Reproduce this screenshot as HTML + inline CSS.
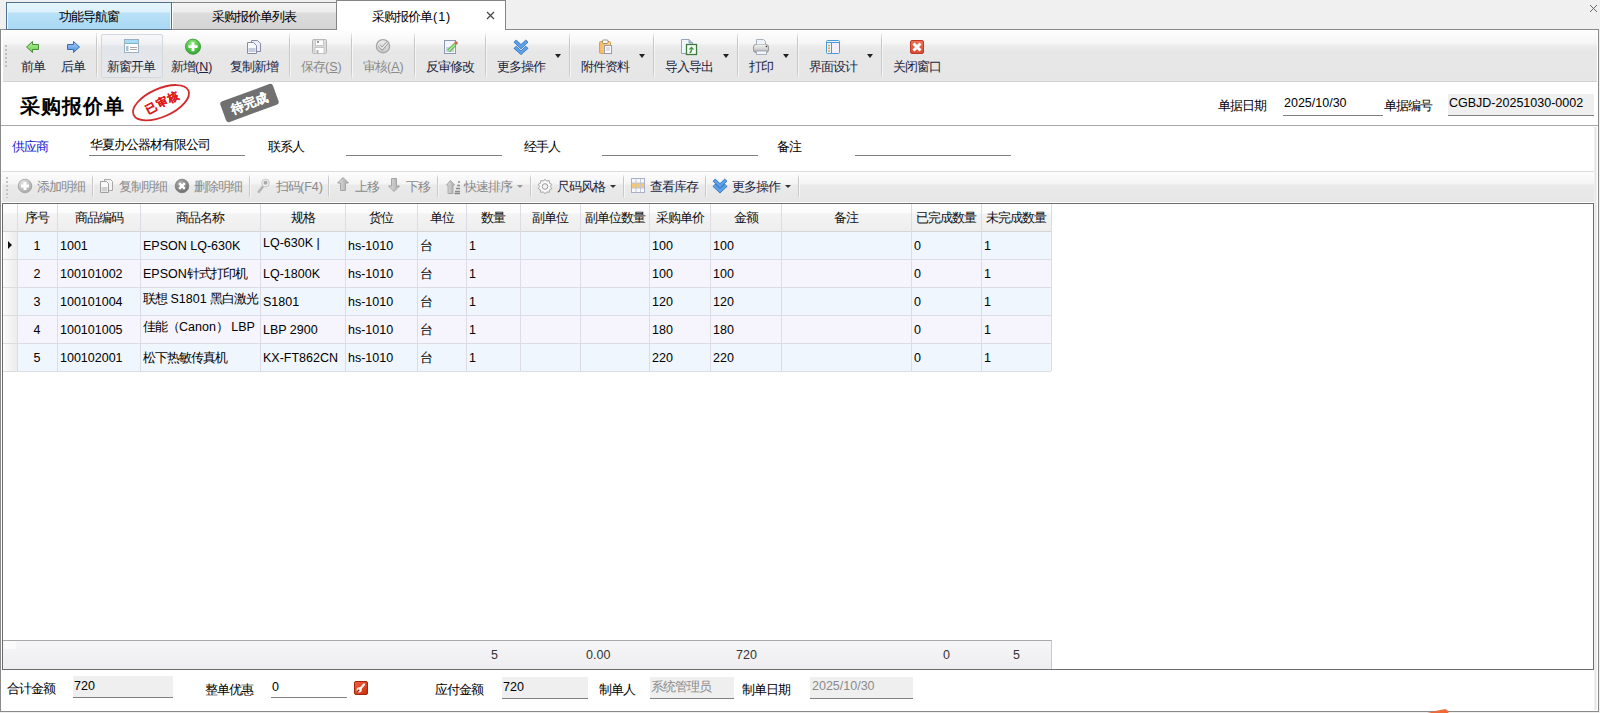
<!DOCTYPE html>
<html><head><meta charset="utf-8">
<style>
*{box-sizing:border-box;margin:0;padding:0}
html,body{width:1600px;height:713px;overflow:hidden;background:#f0f0f0;font-family:"Liberation Sans",sans-serif;font-size:12px;color:#000}
.a{position:absolute}
.t{position:absolute;white-space:nowrap;line-height:14px}
#tab1{left:6px;top:2px;width:166px;height:28px;border:1px solid #50708e;box-shadow:inset 1px 0 #eaf8fe,inset -1px 0 #e0f4fc;background:linear-gradient(#e6f6fd 0,#dcf1fb 9px,#b9e1f8 10px,#a9d8f4 100%)}
#tab2{left:172px;top:2px;width:165px;height:28px;border:1px solid #858585;border-left:none;background:linear-gradient(#f4f4f4 0,#ececec 9px,#dcdcdc 10px,#d4d4d4 100%);box-shadow:inset 1px 0 #fff}
#tab3{left:336px;top:0;width:170px;height:30px;border:1px solid #858585;border-bottom:none;background:#fff}
#panel{left:0;top:29px;width:1599px;height:683px;border:1px solid #8a8a8a;background:#fff}
#tb{left:3px;top:30px;width:1594px;height:52px;background:linear-gradient(#fefefe 0,#f6f6f6 13px,#ececec 16px,#e7e7e7 22px,#e6e6e6 50px);border-bottom:1px solid #d2d2d2}
.sep{position:absolute;width:1px;background:linear-gradient(rgba(200,200,200,0.3),#c8c8c8 15%,#c8c8c8 85%,rgba(200,200,200,0.3));box-shadow:1px 0 rgba(255,255,255,0.6)}
.btxt{position:absolute;white-space:nowrap;line-height:14px;color:#1c2540}
.dis{color:#8a8a8a}
.dd{position:absolute;width:0;height:0;border-left:3.5px solid transparent;border-right:3.5px solid transparent;border-top:4px solid #222}
.c{font-size:13px;letter-spacing:-1px}
.t,.btxt{font-size:12.5px}
</style></head><body>
<!-- tabs -->
<div class="a" id="tab1"></div>
<div class="t" style="left:59px;top:10px"><span class="c">功能导航窗</span></div>
<div class="a" id="tab2"></div>
<div class="t" style="left:212px;top:10px"><span class="c">采购报价单列表</span></div>
<div class="a" id="panel"></div>
<div class="a" style="left:6px;top:29px;width:166px;height:1px;background:#5a7894"></div>
<div class="a" id="tab3"></div>
<div class="t" style="left:372px;top:10px"><span class="c">采购报价单</span><span style="letter-spacing:1px;margin-left:1px">(1)</span></div>
<svg class="a" style="left:486px;top:11px" width="9" height="9"><path d="M1 1L8 8M8 1L1 8" stroke="#444" stroke-width="1.2"/></svg>
<svg class="a" style="left:1589px;top:4px" width="9" height="9"><path d="M1 1L8 8M8 1L1 8" stroke="#666" stroke-width="1"/></svg>

<!-- main toolbar -->
<div class="a" id="tb"></div>
<div class="sep" style="left:5px;top:45px;height:22px;width:2px;background:repeating-linear-gradient(#c0c0c0 0 2px,transparent 2px 4px);box-shadow:none"></div>
<div class="a" style="left:101px;top:34px;width:62px;height:44px;border:1px solid #d2d8de;border-radius:2px;background:linear-gradient(#f8f8fa 0,#eeeff2 10px,#e2e5ea 11px,#e6e8ec 100%)"></div>
<div class="sep" style="left:96px;top:33px;height:45px"></div>
<div class="sep" style="left:289px;top:33px;height:45px"></div>
<div class="sep" style="left:351px;top:33px;height:45px"></div>
<div class="sep" style="left:414px;top:33px;height:45px"></div>
<div class="sep" style="left:485px;top:33px;height:45px"></div>
<div class="sep" style="left:569px;top:33px;height:45px"></div>
<div class="sep" style="left:653px;top:33px;height:45px"></div>
<div class="sep" style="left:737px;top:33px;height:45px"></div>
<div class="sep" style="left:797px;top:33px;height:45px"></div>
<div class="sep" style="left:881px;top:33px;height:45px"></div>
<div class="btxt" style="left:21px;top:60px"><span class="c">前单</span></div>
<div class="btxt" style="left:61px;top:60px"><span class="c">后单</span></div>
<div class="btxt" style="left:107px;top:60px"><span class="c">新窗开单</span></div>
<div class="btxt" style="left:171px;top:60px"><span class="c">新增</span>(<u>N</u>)</div>
<div class="btxt" style="left:230px;top:60px"><span class="c">复制新增</span></div>
<div class="btxt dis" style="left:301px;top:60px"><span class="c">保存</span>(<u>S</u>)</div>
<div class="btxt dis" style="left:363px;top:60px"><span class="c">审核</span>(<u>A</u>)</div>
<div class="btxt" style="left:426px;top:60px"><span class="c">反审修改</span></div>
<div class="btxt" style="left:497px;top:60px"><span class="c">更多操作</span></div>
<div class="btxt" style="left:581px;top:60px"><span class="c">附件资料</span></div>
<div class="btxt" style="left:665px;top:60px"><span class="c">导入导出</span></div>
<div class="btxt" style="left:749px;top:60px"><span class="c">打印</span></div>
<div class="btxt" style="left:809px;top:60px"><span class="c">界面设计</span></div>
<div class="btxt" style="left:893px;top:60px"><span class="c">关闭窗口</span></div>
<div class="dd" style="left:555px;top:54px"></div>
<div class="dd" style="left:639px;top:54px"></div>
<div class="dd" style="left:723px;top:54px"></div>
<div class="dd" style="left:783px;top:54px"></div>
<div class="dd" style="left:867px;top:54px"></div>
<svg class="a" style="left:0;top:0" width="1000" height="82">
<defs>
<linearGradient id="gG" x1="0" y1="0" x2="0" y2="1"><stop offset="0" stop-color="#b4f09a"/><stop offset="1" stop-color="#6ad04a"/></linearGradient>
<linearGradient id="gB" x1="0" y1="0" x2="0" y2="1"><stop offset="0" stop-color="#a8d0fa"/><stop offset="1" stop-color="#4a90e0"/></linearGradient>
<radialGradient id="gPlus" cx="0.45" cy="0.3" r="0.75"><stop offset="0" stop-color="#9ae88a"/><stop offset="0.6" stop-color="#4cc040"/><stop offset="1" stop-color="#2a9a2a"/></radialGradient>
<linearGradient id="gCk" x1="0" y1="0" x2="0" y2="1"><stop offset="0" stop-color="#f0f0f0"/><stop offset="1" stop-color="#c8c8c8"/></linearGradient>
<linearGradient id="gOr" x1="0" y1="0" x2="1" y2="0"><stop offset="0" stop-color="#f8b860"/><stop offset="1" stop-color="#fcd890"/></linearGradient>
<linearGradient id="gRd" x1="0" y1="0" x2="0" y2="1"><stop offset="0" stop-color="#f07050"/><stop offset="1" stop-color="#d84a30"/></linearGradient>
<linearGradient id="gPr" x1="0" y1="0" x2="0" y2="1"><stop offset="0" stop-color="#f4f4f4"/><stop offset="0.6" stop-color="#d0d0d0"/><stop offset="1" stop-color="#8a8a8a"/></linearGradient>
</defs>
<path d="M26.5 47L32.5 41.5V44.5H38.5V49.5H32.5V52.5Z" fill="url(#gG)" stroke="#4a8a3a" stroke-width="1" stroke-linejoin="round"/>
<path d="M79.5 47L73.5 41.5V44.5H67.5V49.5H73.5V52.5Z" fill="url(#gB)" stroke="#3a6aa8" stroke-width="1" stroke-linejoin="round"/>
<rect x="124.5" y="39.5" width="14" height="13" fill="#fff" stroke="#9ab0c4"/>
<rect x="125" y="40" width="13" height="3.5" fill="#a8dcf4"/>
<path d="M125 43.5H138" stroke="#7ab4d0"/>
<rect x="126" y="46" width="2.5" height="5" fill="#a8c0d4"/>
<path d="M130 47.5H137M130 49.5H137" stroke="#b0a8a0"/>
<circle cx="193" cy="46.7" r="7.6" fill="url(#gPlus)" stroke="#3a9a3a" stroke-width="0.8"/>
<path d="M193 42.2V51.2M188.5 46.7H197.5" stroke="#fff" stroke-width="2.8"/>
<path d="M251.5 40.5H257.5L260.5 43.5V51.5H251.5Z" fill="#eeeef8" stroke="#8a8aa4"/>
<path d="M247.5 42.5H253.5L256.5 45.5V53.5H247.5Z" fill="#f6f8fc" stroke="#8a8aa4"/>
<rect x="248.5" y="48" width="7" height="4" fill="#c4cce0"/>
<rect x="312.5" y="39.5" width="14" height="14" rx="1" fill="#dcdcdc" stroke="#b4b4b4"/>
<rect x="315.5" y="40" width="8" height="5.5" fill="#fff" stroke="#bcbcbc" stroke-width="0.8"/>
<rect x="317" y="41" width="2" height="2" fill="#9a9a9a"/>
<rect x="315" y="47.5" width="9" height="6" fill="#fff" stroke="#bcbcbc" stroke-width="0.8"/>
<rect x="316.5" y="50" width="2" height="3.5" fill="#b0b0b0"/>
<circle cx="383" cy="46.2" r="6.6" fill="url(#gCk)" stroke="#a4a4a4" stroke-width="1.3"/>
<path d="M379 45.5L382.2 48.7L387.5 42.5" fill="none" stroke="#9a9a9a" stroke-width="3"/>
<path d="M379 45.5L382.2 48.7L387.5 42.5" fill="none" stroke="#f4f4f4" stroke-width="1.2"/>
<rect x="444.5" y="40.5" width="11" height="13" fill="#f4f8fe" stroke="#8a9ab4"/>
<rect x="446" y="47" width="8" height="5" fill="#c8d0e2"/>
<path d="M448.5 51L455 44.5" stroke="#4a9a3a" stroke-width="3.4"/>
<path d="M448.5 51L455 44.5" stroke="#a4ea8a" stroke-width="2"/>
<circle cx="456" cy="43" r="1.8" fill="#c86a50"/>
<path d="M514 42.2L516.2 40L521 44.6L525.8 40L528 42.2L521 48.8Z" fill="#5aa2ea" stroke="#2a6ab8" stroke-width="0.8" stroke-linejoin="round"/>
<path d="M514 48.4L516.2 46.2L521 50.8L525.8 46.2L528 48.4L521 54.6Z" fill="#5aa2ea" stroke="#2a6ab8" stroke-width="0.8" stroke-linejoin="round"/>
<rect x="599.5" y="41.5" width="11" height="12" rx="1.2" fill="url(#gOr)" stroke="#d8a050"/>
<rect x="602.5" y="40" width="5.5" height="3.5" rx="1" fill="#fff" stroke="#8a7a60" stroke-width="0.8"/>
<rect x="604.5" y="45.5" width="7" height="8" fill="#fafafc" stroke="#9a9aa8"/>
<path d="M606 48H610M606 50H610" stroke="#c0c4d0"/>
<path d="M681.5 39.5H689L692.5 43V53.5H681.5Z" fill="#f0f6fc" stroke="#98a4bc"/>
<path d="M689 39.5V43H692.5" fill="#a8b4cc" stroke="#98a4bc"/>
<rect x="686.5" y="44.5" width="10" height="10" fill="#f8fff8" stroke="#3e7a3e" stroke-width="1.3"/>
<path d="M689.5 52.5C690.5 52.5 691.5 51.5 691.5 49.5" fill="none" stroke="#3a8a3a" stroke-width="1.3"/>
<path d="M688.5 49.5L691.5 46.5L694.5 49.5Z" fill="#3a9a3a"/>
<rect x="753.5" y="44.5" width="15" height="8" rx="2.5" fill="url(#gPr)" stroke="#9a9a9a"/>
<path d="M756.5 44.5V39.5H763.5L765.5 41.5V44.5" fill="#eef4fa" stroke="#a8b0b8"/>
<rect x="756.5" y="51" width="10" height="3.5" fill="#f0f6fc" stroke="#a8b0b8"/>
<circle cx="766.5" cy="46.5" r="0.8" fill="#333"/>
<rect x="826.5" y="40.5" width="13" height="13" rx="1" fill="#eef4fc" stroke="#4a9ad8"/>
<path d="M827 42.5H839M831.5 42.5V53" stroke="#4a9ad8"/>
<rect x="832" y="43" width="7" height="10" fill="#f4eefc"/>
<rect x="827" y="43" width="4" height="10" fill="#e8f6fc"/>
<circle cx="829" cy="45.5" r="1" fill="#e0a040"/>
<circle cx="829" cy="48.2" r="1" fill="#e0a040"/>
<circle cx="829" cy="50.9" r="1" fill="#e0a040"/>
<rect x="910.5" y="40.5" width="13" height="13" rx="1.5" fill="url(#gRd)" stroke="#c03a28"/>
<path d="M913.5 43.5L920.5 50.5M920.5 43.5L913.5 50.5" stroke="#fff" stroke-width="3"/>
</svg>


<!-- title area -->
<div class="a" style="left:20px;top:95px;font-size:20px;line-height:22px;font-weight:bold;letter-spacing:1px;font-family:'Liberation Serif',serif;color:#000;white-space:nowrap">采购报价单</div>
<svg class="a" style="left:120px;top:80px" width="170" height="46">
<g transform="translate(41,22.7) rotate(-24)">
<ellipse cx="0" cy="0" rx="30" ry="14" fill="none" stroke="#d42a2a" stroke-width="1.8"/>
<text x="1.5" y="4" text-anchor="middle" font-size="11" font-weight="bold" fill="#e01818" stroke="#e01818" stroke-width="0.2" font-family="Liberation Sans" letter-spacing="1.5" transform="rotate(-4)">已审核</text>
</g>
<g transform="translate(129.5,23) rotate(-20)">
<rect x="-28" y="-11" width="56" height="22" rx="3" fill="#707070"/>
<text x="0" y="4.5" text-anchor="middle" font-size="12.5" font-weight="bold" fill="#fff" stroke="#fff" stroke-width="0.15" font-family="Liberation Sans">待完成</text>
</g>
</svg>
<div class="a" style="left:1px;top:125px;width:1597px;height:1px;background:#a8a8a8"></div>
<div class="a" style="left:1594px;top:127px;width:3px;height:583px;background:linear-gradient(90deg,#f2f2f2,#e8e8e8 50%,#f6f6f6)"></div>
<div class="t" style="left:1218px;top:99px"><span class="c">单据日期</span></div>
<div class="a" style="left:1283px;top:115px;width:100px;height:1px;background:#808080"></div>
<div class="t" style="left:1284px;top:96px">2025/10/30</div>
<div class="t" style="left:1384px;top:99px"><span class="c">单据编号</span></div>
<div class="a" style="left:1448px;top:94px;width:146px;height:22px;background:#efefef;border-bottom:1px solid #808080"></div>
<div class="t" style="left:1449px;top:96px">CGBJD-20251030-0002</div>

<!-- form row -->
<div class="t" style="left:12px;top:140px;color:#1a1ad0"><span class="c">供应商</span></div>
<div class="t" style="left:90px;top:138px"><span class="c">华夏办公器材有限公司</span></div>
<div class="a" style="left:89px;top:155px;width:156px;height:1px;background:#808080"></div>
<div class="t" style="left:268px;top:140px"><span class="c">联系人</span></div>
<div class="a" style="left:346px;top:155px;width:156px;height:1px;background:#808080"></div>
<div class="t" style="left:524px;top:140px"><span class="c">经手人</span></div>
<div class="a" style="left:602px;top:155px;width:156px;height:1px;background:#808080"></div>
<div class="t" style="left:777px;top:140px"><span class="c">备注</span></div>
<div class="a" style="left:855px;top:155px;width:156px;height:1px;background:#808080"></div>
<div class="a" style="left:2px;top:171px;width:1592px;height:31px;border-top:1px solid #dcdcdc;background:linear-gradient(#fdfdfd 0,#f4f4f4 12px,#eaeaea 13px,#e6e6e6 100%)"></div>
<div class="a" style="left:6px;top:177px;width:2px;height:21px;background:repeating-linear-gradient(#c4c4c4 0 2px,transparent 2px 4px)"></div>
<div class="sep" style="left:92px;top:175px;height:23px"></div>
<div class="sep" style="left:249px;top:175px;height:23px"></div>
<div class="sep" style="left:328px;top:175px;height:23px"></div>
<div class="sep" style="left:437px;top:175px;height:23px"></div>
<div class="sep" style="left:530px;top:175px;height:23px"></div>
<div class="sep" style="left:623px;top:175px;height:23px"></div>
<div class="sep" style="left:705px;top:175px;height:23px"></div>
<div class="sep" style="left:798px;top:175px;height:23px"></div>
<div class="btxt dis" style="left:37px;top:180px"><span class="c">添加明细</span></div>
<div class="btxt dis" style="left:119px;top:180px"><span class="c">复制明细</span></div>
<div class="btxt dis" style="left:194px;top:180px"><span class="c">删除明细</span></div>
<div class="btxt dis" style="left:276px;top:180px"><span class="c">扫码</span>(F4)</div>
<div class="btxt dis" style="left:355px;top:180px"><span class="c">上移</span></div>
<div class="btxt dis" style="left:406px;top:180px"><span class="c">下移</span></div>
<div class="btxt dis" style="left:464px;top:180px"><span class="c">快速排序</span></div>
<div class="btxt" style="left:557px;top:180px"><span class="c">尺码风格</span></div>
<div class="btxt" style="left:650px;top:180px"><span class="c">查看库存</span></div>
<div class="btxt" style="left:732px;top:180px"><span class="c">更多操作</span></div>
<div class="dd" style="left:517px;top:185px;border-width:3px 3px 0;border-top-color:#999"></div>
<div class="dd" style="left:610px;top:185px;border-width:3px 3px 0;border-top-color:#333"></div>
<div class="dd" style="left:785px;top:185px;border-width:3px 3px 0;border-top-color:#333"></div>
<svg class="a" style="left:0;top:170px" width="800" height="34">
<defs><radialGradient id="gg" cx="0.4" cy="0.3" r="0.75"><stop offset="0" stop-color="#e8e8e8"/><stop offset="1" stop-color="#a4a4a4"/></radialGradient>
<radialGradient id="gd" cx="0.4" cy="0.3" r="0.75"><stop offset="0" stop-color="#b0b0b0"/><stop offset="1" stop-color="#6a6a6a"/></radialGradient>
<linearGradient id="ga" x1="0" y1="0" x2="1" y2="0"><stop offset="0" stop-color="#e0e0e0"/><stop offset="1" stop-color="#a8a8a8"/></linearGradient></defs>
<circle cx="25" cy="16" r="6.8" fill="url(#gg)" stroke="#a0a0a0" stroke-width="0.8"/>
<path d="M25 12V20M21 16H29" stroke="#fff" stroke-width="2.8"/>
<path d="M104.5 9.5H110.5L112.5 11.5V20.5H104.5Z" fill="#f4f4f4" stroke="#a8a8a8"/>
<path d="M100.5 11.5H106.5L108.5 13.5V22.5H100.5Z" fill="#fafafa" stroke="#a0a0a0"/>
<rect x="101.5" y="17" width="6" height="4.5" fill="#d0d0d0"/>
<circle cx="182" cy="16" r="6.8" fill="url(#gd)" stroke="#7a7a7a" stroke-width="0.8"/>
<path d="M179.2 13.2L184.8 18.8M184.8 13.2L179.2 18.8" stroke="#fff" stroke-width="2.4"/>
<path d="M263 16.5L258.8 21.8" stroke="#b4b4b4" stroke-width="2.6" stroke-linecap="round"/>
<circle cx="265.5" cy="13" r="3.8" fill="#f4f4f4" stroke="#c4c4c4"/>
<circle cx="265.5" cy="12.8" r="2" fill="#a8a8a8"/>
<path d="M343 7.5L348.5 13H345.5V20.5H340.5V13H337.5Z" fill="url(#ga)" stroke="#a4a4a4" stroke-linejoin="round"/>
<path d="M394 21.5L399.5 16H396.5V8.5H391.5V16H388.5Z" fill="url(#ga)" stroke="#a4a4a4" stroke-linejoin="round"/>
<path d="M450.5 10.5L454.5 15H453V23.5H448V15H446.5Z" fill="url(#ga)" stroke="#a8a8a8" stroke-linejoin="round"/>
<path d="M458 12H460M457 15.5H460M456 18.5H460M455 21.5H460M454.5 23.5H460" stroke="#8a8a8a" stroke-width="1.6"/>
<path d="M545 9.2L546.6 11.1L549.2 10.6L549.5 13.1L551.8 14.3L550.4 16.5L551.8 18.7L549.5 19.9L549.2 22.4L546.6 21.9L545 23.8L543.4 21.9L540.8 22.4L540.5 19.9L538.2 18.7L539.6 16.5L538.2 14.3L540.5 13.1L540.8 10.6L543.4 11.1Z" fill="#fafafa" stroke="#a4a4a4" stroke-linejoin="round"/>
<circle cx="545" cy="16.5" r="2.8" fill="#f4f4f4" stroke="#9a9a9a"/>
<rect x="631.5" y="8.5" width="13" height="14" fill="#f8f8fc" stroke="#a8b0c8"/>
<rect x="632" y="13" width="12" height="5" fill="#f8c870"/>
<path d="M636 9V22M640.5 9V22M632 13H644M632 18H644" stroke="#c0c4d4"/>
<path d="M713 11.2L715.2 9L720 13.6L724.8 9L727 11.2L720 17.8Z" fill="#5aa2ea" stroke="#2a6ab8" stroke-width="0.8" stroke-linejoin="round"/>
<path d="M713 16.4L715.2 14.2L720 18.8L724.8 14.2L727 16.4L720 23Z" fill="#5aa2ea" stroke="#2a6ab8" stroke-width="0.8" stroke-linejoin="round"/>
</svg>
<div class="a" style="left:2px;top:203px;width:1592px;height:467px;border:1px solid #6c6c6c;background:#fff"></div>
<div class="a" style="left:3px;top:204px;width:1048px;height:28px;background:linear-gradient(#fff 0,#fbfbfb 9px,#f3f3f3 10px,#eeeeee 100%);border-bottom:1px solid #d4d4d4"></div>
<div class="a" style="left:17px;top:232px;width:1034px;height:28px;background:#eff6fe;border-bottom:1px solid #dadde4"></div>
<div class="a" style="left:3px;top:232px;width:14px;height:28px;background:linear-gradient(90deg,#fbfbfb,#ececec);border-bottom:1px solid #dcdcdc"></div>
<div class="a" style="left:17px;top:260px;width:1034px;height:28px;background:#f6f4fc;border-bottom:1px solid #dadde4"></div>
<div class="a" style="left:3px;top:260px;width:14px;height:28px;background:linear-gradient(90deg,#fbfbfb,#ececec);border-bottom:1px solid #dcdcdc"></div>
<div class="a" style="left:17px;top:288px;width:1034px;height:28px;background:#eff6fe;border-bottom:1px solid #dadde4"></div>
<div class="a" style="left:3px;top:288px;width:14px;height:28px;background:linear-gradient(90deg,#fbfbfb,#ececec);border-bottom:1px solid #dcdcdc"></div>
<div class="a" style="left:17px;top:316px;width:1034px;height:28px;background:#f6f4fc;border-bottom:1px solid #dadde4"></div>
<div class="a" style="left:3px;top:316px;width:14px;height:28px;background:linear-gradient(90deg,#fbfbfb,#ececec);border-bottom:1px solid #dcdcdc"></div>
<div class="a" style="left:17px;top:344px;width:1034px;height:28px;background:#eff6fe;border-bottom:1px solid #dadde4"></div>
<div class="a" style="left:3px;top:344px;width:14px;height:28px;background:linear-gradient(90deg,#fbfbfb,#ececec);border-bottom:1px solid #dcdcdc"></div>
<div class="a" style="left:17px;top:204px;width:1px;height:167px;background:#dcdce2"></div>
<div class="a" style="left:57px;top:204px;width:1px;height:167px;background:#dcdce2"></div>
<div class="a" style="left:140px;top:204px;width:1px;height:167px;background:#dcdce2"></div>
<div class="a" style="left:260px;top:204px;width:1px;height:167px;background:#dcdce2"></div>
<div class="a" style="left:345px;top:204px;width:1px;height:167px;background:#dcdce2"></div>
<div class="a" style="left:417px;top:204px;width:1px;height:167px;background:#dcdce2"></div>
<div class="a" style="left:466px;top:204px;width:1px;height:167px;background:#dcdce2"></div>
<div class="a" style="left:520px;top:204px;width:1px;height:167px;background:#dcdce2"></div>
<div class="a" style="left:580px;top:204px;width:1px;height:167px;background:#dcdce2"></div>
<div class="a" style="left:649px;top:204px;width:1px;height:167px;background:#dcdce2"></div>
<div class="a" style="left:710px;top:204px;width:1px;height:167px;background:#dcdce2"></div>
<div class="a" style="left:781px;top:204px;width:1px;height:167px;background:#dcdce2"></div>
<div class="a" style="left:911px;top:204px;width:1px;height:167px;background:#dcdce2"></div>
<div class="a" style="left:981px;top:204px;width:1px;height:167px;background:#dcdce2"></div>
<div class="a" style="left:1051px;top:204px;width:1px;height:167px;background:#dcdce2"></div>
<div class="a" style="left:8px;top:241px;width:0;height:0;border-top:4px solid transparent;border-bottom:4px solid transparent;border-left:4px solid #111"></div>
<div class="t" style="left:17px;width:40px;top:211px;text-align:center;color:#111"><span class="c">序号</span></div>
<div class="t" style="left:57px;width:83px;top:211px;text-align:center;color:#111"><span class="c">商品编码</span></div>
<div class="t" style="left:140px;width:120px;top:211px;text-align:center;color:#111"><span class="c">商品名称</span></div>
<div class="t" style="left:260px;width:85px;top:211px;text-align:center;color:#111"><span class="c">规格</span></div>
<div class="t" style="left:345px;width:72px;top:211px;text-align:center;color:#111"><span class="c">货位</span></div>
<div class="t" style="left:417px;width:49px;top:211px;text-align:center;color:#111"><span class="c">单位</span></div>
<div class="t" style="left:466px;width:54px;top:211px;text-align:center;color:#111"><span class="c">数量</span></div>
<div class="t" style="left:520px;width:60px;top:211px;text-align:center;color:#111"><span class="c">副单位</span></div>
<div class="t" style="left:580px;width:69px;top:211px;text-align:center;color:#111"><span class="c">副单位数量</span></div>
<div class="t" style="left:649px;width:61px;top:211px;text-align:center;color:#111"><span class="c">采购单价</span></div>
<div class="t" style="left:710px;width:71px;top:211px;text-align:center;color:#111"><span class="c">金额</span></div>
<div class="t" style="left:781px;width:130px;top:211px;text-align:center;color:#111"><span class="c">备注</span></div>
<div class="t" style="left:911px;width:70px;top:211px;text-align:center;color:#111"><span class="c">已完成数量</span></div>
<div class="t" style="left:981px;width:70px;top:211px;text-align:center;color:#111"><span class="c">未完成数量</span></div>
<div class="t" style="left:17px;width:40px;top:239px;text-align:center">1</div>
<div class="t" style="left:60px;width:80px;overflow:hidden;top:239px">1001</div>
<div class="t" style="left:143px;width:117px;overflow:hidden;top:239px">EPSON LQ-630K</div>
<div class="t" style="left:263px;width:82px;overflow:hidden;top:236px">LQ-630K |</div>
<div class="t" style="left:348px;width:69px;overflow:hidden;top:239px">hs-1010</div>
<div class="t" style="left:420px;width:46px;overflow:hidden;top:239px"><span class="c">台</span></div>
<div class="t" style="left:469px;width:51px;overflow:hidden;top:239px">1</div>
<div class="t" style="left:652px;width:58px;overflow:hidden;top:239px">100</div>
<div class="t" style="left:713px;width:68px;overflow:hidden;top:239px">100</div>
<div class="t" style="left:914px;width:67px;overflow:hidden;top:239px">0</div>
<div class="t" style="left:984px;width:67px;overflow:hidden;top:239px">1</div>
<div class="t" style="left:17px;width:40px;top:267px;text-align:center">2</div>
<div class="t" style="left:60px;width:80px;overflow:hidden;top:267px">100101002</div>
<div class="t" style="left:143px;width:117px;overflow:hidden;top:267px">EPSON<span class="c">针式打印机</span></div>
<div class="t" style="left:263px;width:82px;overflow:hidden;top:267px">LQ-1800K</div>
<div class="t" style="left:348px;width:69px;overflow:hidden;top:267px">hs-1010</div>
<div class="t" style="left:420px;width:46px;overflow:hidden;top:267px"><span class="c">台</span></div>
<div class="t" style="left:469px;width:51px;overflow:hidden;top:267px">1</div>
<div class="t" style="left:652px;width:58px;overflow:hidden;top:267px">100</div>
<div class="t" style="left:713px;width:68px;overflow:hidden;top:267px">100</div>
<div class="t" style="left:914px;width:67px;overflow:hidden;top:267px">0</div>
<div class="t" style="left:984px;width:67px;overflow:hidden;top:267px">1</div>
<div class="t" style="left:17px;width:40px;top:295px;text-align:center">3</div>
<div class="t" style="left:60px;width:80px;overflow:hidden;top:295px">100101004</div>
<div class="t" style="left:143px;width:117px;overflow:hidden;top:292px"><span class="c">联想</span> S1801 <span class="c">黑白激光</span></div>
<div class="t" style="left:263px;width:82px;overflow:hidden;top:295px">S1801</div>
<div class="t" style="left:348px;width:69px;overflow:hidden;top:295px">hs-1010</div>
<div class="t" style="left:420px;width:46px;overflow:hidden;top:295px"><span class="c">台</span></div>
<div class="t" style="left:469px;width:51px;overflow:hidden;top:295px">1</div>
<div class="t" style="left:652px;width:58px;overflow:hidden;top:295px">120</div>
<div class="t" style="left:713px;width:68px;overflow:hidden;top:295px">120</div>
<div class="t" style="left:914px;width:67px;overflow:hidden;top:295px">0</div>
<div class="t" style="left:984px;width:67px;overflow:hidden;top:295px">1</div>
<div class="t" style="left:17px;width:40px;top:323px;text-align:center">4</div>
<div class="t" style="left:60px;width:80px;overflow:hidden;top:323px">100101005</div>
<div class="t" style="left:143px;width:117px;overflow:hidden;top:320px"><span class="c">佳能（</span>Canon<span class="c">）</span> LBP</div>
<div class="t" style="left:263px;width:82px;overflow:hidden;top:323px">LBP 2900</div>
<div class="t" style="left:348px;width:69px;overflow:hidden;top:323px">hs-1010</div>
<div class="t" style="left:420px;width:46px;overflow:hidden;top:323px"><span class="c">台</span></div>
<div class="t" style="left:469px;width:51px;overflow:hidden;top:323px">1</div>
<div class="t" style="left:652px;width:58px;overflow:hidden;top:323px">180</div>
<div class="t" style="left:713px;width:68px;overflow:hidden;top:323px">180</div>
<div class="t" style="left:914px;width:67px;overflow:hidden;top:323px">0</div>
<div class="t" style="left:984px;width:67px;overflow:hidden;top:323px">1</div>
<div class="t" style="left:17px;width:40px;top:351px;text-align:center">5</div>
<div class="t" style="left:60px;width:80px;overflow:hidden;top:351px">100102001</div>
<div class="t" style="left:143px;width:117px;overflow:hidden;top:351px"><span class="c">松下热敏传真机</span></div>
<div class="t" style="left:263px;width:82px;overflow:hidden;top:351px">KX-FT862CN</div>
<div class="t" style="left:348px;width:69px;overflow:hidden;top:351px">hs-1010</div>
<div class="t" style="left:420px;width:46px;overflow:hidden;top:351px"><span class="c">台</span></div>
<div class="t" style="left:469px;width:51px;overflow:hidden;top:351px">1</div>
<div class="t" style="left:652px;width:58px;overflow:hidden;top:351px">220</div>
<div class="t" style="left:713px;width:68px;overflow:hidden;top:351px">220</div>
<div class="t" style="left:914px;width:67px;overflow:hidden;top:351px">0</div>
<div class="t" style="left:984px;width:67px;overflow:hidden;top:351px">1</div>
<div class="a" style="left:3px;top:640px;width:1049px;height:29px;background:linear-gradient(#f6f6f8,#eeeef0);border-top:1px solid #a8a8a8;border-right:1px solid #c8c8c8"></div>
<div class="a" style="left:4px;top:641px;width:12px;height:8px;background:#fbfbfb"></div>
<div class="t" style="left:491px;top:648px;color:#333">5</div>
<div class="t" style="left:586px;top:648px;color:#333">0.00</div>
<div class="t" style="left:736px;top:648px;color:#333">720</div>
<div class="t" style="left:943px;top:648px;color:#333">0</div>
<div class="t" style="left:1013px;top:648px;color:#333">5</div>
<div class="t" style="left:7px;top:682px"><span class="c">合计金额</span></div>
<div class="a" style="left:73px;top:676px;width:100px;height:22px;background:#efefef;border-bottom:1px solid #808080"></div>
<div class="t" style="left:74px;top:679px">720</div>
<div class="t" style="left:205px;top:683px"><span class="c">整单优惠</span></div>
<div class="a" style="left:271px;top:697px;width:76px;height:1px;background:#808080"></div>
<div class="t" style="left:272px;top:680px">0</div>
<svg class="a" style="left:354px;top:681px" width="14" height="14"><defs><linearGradient id="gW" x1="0" y1="0" x2="1" y2="1"><stop offset="0" stop-color="#f06040"/><stop offset="1" stop-color="#c83010"/></linearGradient></defs><rect x="0.5" y="0.5" width="13" height="13" rx="1.5" fill="url(#gW)" stroke="#a02808"/><path d="M10 3.5L6.5 7.5" stroke="#fff4e8" stroke-width="2.2" stroke-linecap="round"/><circle cx="5.2" cy="8.8" r="2.6" fill="#fff4e8"/><path d="M3.2 10.8L5.2 8.8" stroke="#8a2010" stroke-width="1.3"/></svg>
<div class="t" style="left:435px;top:683px"><span class="c">应付金额</span></div>
<div class="a" style="left:502px;top:677px;width:86px;height:22px;background:#efefef;border-bottom:1px solid #808080"></div>
<div class="t" style="left:503px;top:680px">720</div>
<div class="t" style="left:599px;top:683px"><span class="c">制单人</span></div>
<div class="a" style="left:650px;top:677px;width:84px;height:22px;background:#efefef;border-bottom:1px solid #808080"></div>
<div class="t" style="left:651px;top:680px;color:#8a8a8a"><span class="c">系统管理员</span></div>
<div class="t" style="left:742px;top:683px"><span class="c">制单日期</span></div>
<div class="a" style="left:810px;top:677px;width:103px;height:22px;background:#efefef;border-bottom:1px solid #808080"></div>
<div class="t" style="left:812px;top:679px;color:#8a8a8a">2025/10/30</div>
<svg class="a" style="left:1424px;top:703px" width="30" height="10"><path d="M3 10C9 8.5 14 7.5 19 6.5C22 5.5 24 6.5 24.5 10Z" fill="#f06a38"/></svg>
</body></html>
